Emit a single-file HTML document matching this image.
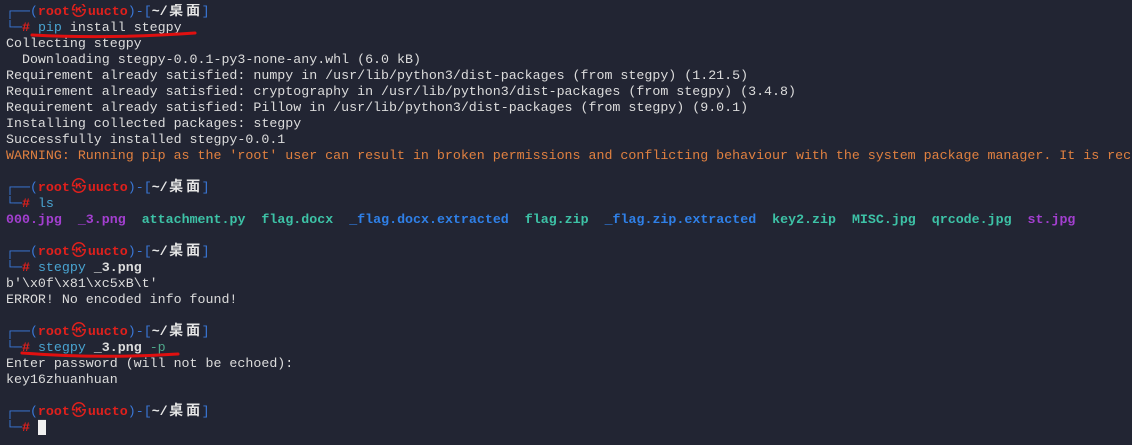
<!DOCTYPE html>
<html><head><meta charset="utf-8"><style>
html,body{margin:0;padding:0;width:1132px;height:445px;overflow:hidden;background:#222533;}
pre{margin:0;position:absolute;left:6px;top:4px;width:1126px;overflow:hidden;font-family:"Liberation Mono","Noto Sans CJK SC",monospace;font-size:13.3px;line-height:16px;color:#dcdcdc;white-space:pre;}
.r{color:#e0201c;font-weight:bold}
.b{color:#3a78d8}
.w{color:#e6e6e6;font-weight:bold}
.c{color:#49a3d0}
.g{color:#4ea88a}
.o{color:#e08040}
.p{color:#a33fd0;font-weight:bold}
.t{color:#3dc2a6;font-weight:bold}
.d{color:#2f80e8;font-weight:bold}
.cur{background:#f0f0f0;color:#f0f0f0}
.k{display:inline-block;width:17px;text-align:center;font-size:14px;line-height:16px;vertical-align:top}
.s{display:inline-block;width:18px;text-align:center;font-size:15px;line-height:16px;vertical-align:top}
svg{position:absolute;left:0;top:0}
</style></head><body>
<pre><span class="b">┌──(</span><span class="r">root<span class="s">㉿</span>uucto</span><span class="b">)-[</span><span class="w">~/<span class="k">桌</span><span class="k">面</span></span><span class="b">]</span>
<span class="b">└─</span><span class="r">#</span> <span class="c">pip</span> install stegpy
Collecting stegpy
  Downloading stegpy-0.0.1-py3-none-any.whl (6.0 kB)
Requirement already satisfied: numpy in /usr/lib/python3/dist-packages (from stegpy) (1.21.5)
Requirement already satisfied: cryptography in /usr/lib/python3/dist-packages (from stegpy) (3.4.8)
Requirement already satisfied: Pillow in /usr/lib/python3/dist-packages (from stegpy) (9.0.1)
Installing collected packages: stegpy
Successfully installed stegpy-0.0.1
<span class="o">WARNING: Running pip as the 'root' user can result in broken permissions and conflicting behaviour with the system package manager. It is rec</span>

<span class="b">┌──(</span><span class="r">root<span class="s">㉿</span>uucto</span><span class="b">)-[</span><span class="w">~/<span class="k">桌</span><span class="k">面</span></span><span class="b">]</span>
<span class="b">└─</span><span class="r">#</span> <span class="c">ls</span>
<span class="p">000.jpg</span>  <span class="p">_3.png</span>  <span class="t">attachment.py</span>  <span class="t">flag.docx</span>  <span class="d">_flag.docx.extracted</span>  <span class="t">flag.zip</span>  <span class="d">_flag.zip.extracted</span>  <span class="t">key2.zip</span>  <span class="t">MISC.jpg</span>  <span class="t">qrcode.jpg</span>  <span class="p">st.jpg</span>

<span class="b">┌──(</span><span class="r">root<span class="s">㉿</span>uucto</span><span class="b">)-[</span><span class="w">~/<span class="k">桌</span><span class="k">面</span></span><span class="b">]</span>
<span class="b">└─</span><span class="r">#</span> <span class="c">stegpy</span> <b>_3.png</b>
b'\x0f\x81\xc5xB\t'
ERROR! No encoded info found!

<span class="b">┌──(</span><span class="r">root<span class="s">㉿</span>uucto</span><span class="b">)-[</span><span class="w">~/<span class="k">桌</span><span class="k">面</span></span><span class="b">]</span>
<span class="b">└─</span><span class="r">#</span> <span class="c">stegpy</span> <b>_3.png</b> <span class="g">-p</span>
Enter password (will not be echoed):
key16zhuanhuan

<span class="b">┌──(</span><span class="r">root<span class="s">㉿</span>uucto</span><span class="b">)-[</span><span class="w">~/<span class="k">桌</span><span class="k">面</span></span><span class="b">]</span>
<span class="b">└─</span><span class="r">#</span> <span class="cur">█</span></pre>
<svg width="1132" height="445"><path d="M32 35 Q110 39 195 33" stroke="#e01010" stroke-width="3" fill="none" stroke-linecap="round"/><path d="M22 353 Q100 359 178 354" stroke="#e01010" stroke-width="3" fill="none" stroke-linecap="round"/></svg>
</body></html>
